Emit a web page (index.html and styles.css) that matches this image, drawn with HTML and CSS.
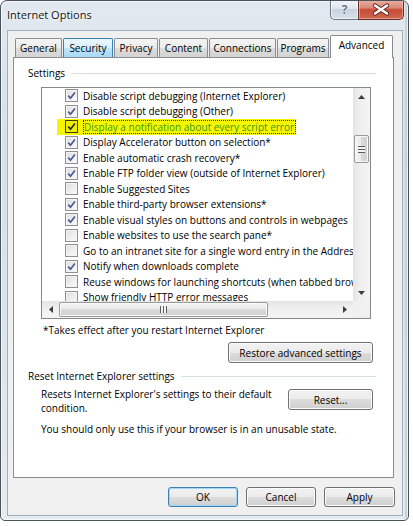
FILE: index.html
```html
<!DOCTYPE html>
<html>
<head>
<meta charset="utf-8">
<title>Internet Options</title>
<link rel="stylesheet" href="styles.css">
</head>
<body>
<div class="window">
  <div class="titlebar">
    <span class="title">Internet Options</span>
    <div class="caption">
      <div class="cbtn help">?</div>
      <div class="cbtn close">
        <svg width="44" height="19" viewBox="0 0 44 19">
          <path d="M16 5.5 L28 13.5 M28 5.5 L16 13.5" stroke="#5b2118" stroke-width="4.4" stroke-linecap="round"/>
          <path d="M16 5.5 L28 13.5 M28 5.5 L16 13.5" stroke="#ffffff" stroke-width="2.6" stroke-linecap="round"/>
        </svg>
      </div>
    </div>
  </div>
  <div class="client">
    <div class="tabs">
      <div class="tab t-general">General</div>
      <div class="tab t-security hover">Security</div>
      <div class="tab t-privacy">Privacy</div>
      <div class="tab t-content">Content</div>
      <div class="tab t-connections">Connections</div>
      <div class="tab t-programs">Programs</div>
      <div class="tab t-advanced active">Advanced</div>
    </div>
    <div class="panel">
      <div class="group-head"><span>Settings</span><i class="rule"></i></div>
      <div class="listbox">
        <div class="items">
          <div class="row"><span class="mark"><span class="cb on"><svg viewBox="0 0 11 11"><path d="M2.3 5.6 L4.5 8.2 L8.9 2.4"/></svg></span><span class="lbl">Disable script debugging (Internet Explorer)</span></span></div>
          <div class="row"><span class="mark"><span class="cb on"><svg viewBox="0 0 11 11"><path d="M2.3 5.6 L4.5 8.2 L8.9 2.4"/></svg></span><span class="lbl">Disable script debugging (Other)</span></span></div>
          <div class="row marked"><span class="mark"><span class="cb on"><svg viewBox="0 0 11 11"><path d="M2.3 5.6 L4.5 8.2 L8.9 2.4"/></svg></span><span class="lbl">Display a notification about every script error</span></span></div>
          <div class="row"><span class="mark"><span class="cb on"><svg viewBox="0 0 11 11"><path d="M2.3 5.6 L4.5 8.2 L8.9 2.4"/></svg></span><span class="lbl">Display Accelerator button on selection*</span></span></div>
          <div class="row"><span class="mark"><span class="cb on"><svg viewBox="0 0 11 11"><path d="M2.3 5.6 L4.5 8.2 L8.9 2.4"/></svg></span><span class="lbl">Enable automatic crash recovery*</span></span></div>
          <div class="row"><span class="mark"><span class="cb on"><svg viewBox="0 0 11 11"><path d="M2.3 5.6 L4.5 8.2 L8.9 2.4"/></svg></span><span class="lbl">Enable FTP folder view (outside of Internet Explorer)</span></span></div>
          <div class="row"><span class="mark"><span class="cb"></span><span class="lbl">Enable Suggested Sites</span></span></div>
          <div class="row"><span class="mark"><span class="cb on"><svg viewBox="0 0 11 11"><path d="M2.3 5.6 L4.5 8.2 L8.9 2.4"/></svg></span><span class="lbl">Enable third-party browser extensions*</span></span></div>
          <div class="row"><span class="mark"><span class="cb on"><svg viewBox="0 0 11 11"><path d="M2.3 5.6 L4.5 8.2 L8.9 2.4"/></svg></span><span class="lbl">Enable visual styles on buttons and controls in webpages</span></span></div>
          <div class="row"><span class="mark"><span class="cb"></span><span class="lbl">Enable websites to use the search pane*</span></span></div>
          <div class="row"><span class="mark"><span class="cb"></span><span class="lbl">Go to an intranet site for a single word entry in the Address bar</span></span></div>
          <div class="row"><span class="mark"><span class="cb on"><svg viewBox="0 0 11 11"><path d="M2.3 5.6 L4.5 8.2 L8.9 2.4"/></svg></span><span class="lbl">Notify when downloads complete</span></span></div>
          <div class="row"><span class="mark"><span class="cb"></span><span class="lbl">Reuse windows for launching shortcuts (when tabbed browsing is off)</span></span></div>
          <div class="row"><span class="mark"><span class="cb"></span><span class="lbl">Show friendly HTTP error messages</span></span></div>
        </div>
        <div class="vscroll">
          <div class="arrow"><svg width="7" height="4" viewBox="0 0 7 4"><polygon points="0,4 7,4 3.5,0" fill="#3c3c3c"/></svg></div>
          <div class="vtrack"><div class="vthumb"><span class="vgrip"></span></div></div>
          <div class="arrow"><svg width="7" height="4" viewBox="0 0 7 4"><polygon points="0,0 7,0 3.5,4" fill="#3c3c3c"/></svg></div>
        </div>
        <div class="hscroll">
          <div class="arrow"><svg width="4" height="7" viewBox="0 0 4 7"><polygon points="4,0 4,7 0,3.5" fill="#3c3c3c"/></svg></div>
          <div class="htrack"><div class="hthumb"><span class="hgrip"></span></div></div>
          <div class="arrow"><svg width="4" height="7" viewBox="0 0 4 7"><polygon points="0,0 0,7 4,3.5" fill="#3c3c3c"/></svg></div>
        </div>
        <div class="corner"></div>
      </div>
      <p class="note">*Takes effect after you restart Internet Explorer</p>
      <div class="restore-row"><button class="btn restore">Restore advanced settings</button></div>
      <div class="group-head reset-head"><span>Reset Internet Explorer settings</span><i class="rule"></i></div>
      <div class="reset-row">
        <p>Resets Internet Explorer's settings to their default<br>condition.</p>
        <button class="btn reset">Reset...</button>
      </div>
      <p class="warn">You should only use this if your browser is in an unusable state.</p>
    </div>
    <div class="actions">
      <button class="btn ok">OK</button>
      <button class="btn">Cancel</button>
      <button class="btn apply">Apply</button>
    </div>
  </div>
</div>
</body>
</html>
```

FILE: styles.css
```css
* { box-sizing: border-box; }
html, body { margin: 0; background: #ffffff; }
body {
  font-family: "Open Sans", "Noto Sans", sans-serif;
  font-size: 10px;
  color: #000;
}

.window {
  width: 409px;
  height: 521px;
  border: 1px solid #4b525a;
  border-radius: 7px 7px 5px 5px;
  background: linear-gradient(180deg, #e1e9f0 0%, #d5e0e9 30%, #dde6ed 70%, #e4ebf1 100%);
  box-shadow: inset 0 0 0 1px rgba(255,255,255,0.65), inset -3px 0 0 #c9d3d6;
  display: flex;
  flex-direction: column;
  overflow: hidden;
}

.titlebar {
  flex: none;
  height: 29px;
  display: flex;
  justify-content: space-between;
  align-items: flex-start;
  padding: 0 4px 0 6px;
}
.title {
  font-size: 11px;
  line-height: 14px;
  padding-top: 7px;
  color: #111;
  text-shadow: 0 0 5px #fff, 0 0 3px #fff;
}
.caption { display: flex; margin-top: -1px; }
.cbtn { height: 20px; display: flex; align-items: center; justify-content: center; }
.help {
  width: 28px;
  border: 1px solid #6f7985;
  border-top: none;
  border-right: none;
  border-radius: 0 0 0 5px;
  background: linear-gradient(180deg, #f3f6f9 0%, #dfe6ed 45%, #c9d3dd 50%, #d9e1e8 100%);
  box-shadow: inset 0 0 0 1px rgba(255,255,255,0.6);
  font-weight: bold;
  font-size: 12px;
  color: #69778a;
  text-shadow: 0 0 2px #fff, 0 0 1px #fff;
}
.close {
  width: 46px;
  border: 1px solid #6a2c24;
  border-top: none;
  border-radius: 0 0 5px 0;
  background: linear-gradient(180deg, #eab3a6 0%, #d98a78 40%, #c84a35 52%, #cf6a52 100%);
  box-shadow: inset 0 0 0 1px rgba(255,210,200,0.5);
}

.client {
  flex: none;
  height: 486px;
  margin: 0 5px 0 6px;
  border: 1px solid #a3aeb9;
  background: #f0f0f0;
  padding: 4px 0 0 5px;
  display: flex;
  flex-direction: column;
}

.tabs {
  display: flex;
  align-items: flex-end;
  height: 23px;
  margin: 0 0 -1px 2px;
  position: relative;
  z-index: 1;
}
.tab {
  height: 19px;
  margin-bottom: 1px;
  margin-right: 1px;
  border: 1px solid #898c95;
  border-bottom: none;
  border-radius: 2px 2px 0 0;
  background: linear-gradient(180deg, #f4f4f4 0%, #ececec 50%, #dedede 50%, #d3d3d3 100%);
  display: flex;
  align-items: center;
  justify-content: center;
  padding-bottom: 1px;
  white-space: nowrap;
}
.tab.hover {
  border-color: #3c7fb1;
  background: linear-gradient(180deg, #eaf6fd 0%, #d9f0fc 50%, #bee6fd 50%, #a7d9f5 100%);
}
.tab.active {
  height: 23px;
  margin-bottom: 0;
  background: #ffffff;
  padding-bottom: 4px;
}
.t-general { width: 47px; }
.t-security { width: 50px; }
.t-privacy { width: 44px; }
.t-content { width: 49px; }
.t-connections { width: 67px; }
.t-programs { width: 52px; }
.t-advanced { width: 63px; }

.panel {
  flex: none;
  height: 421px;
  margin-right: 8px;
  background: #ffffff;
  border: 1px solid #898c95;
  padding-top: 8px;
}

.group-head {
  display: flex;
  align-items: center;
  gap: 6px;
  height: 14px;
  margin: 0 17px 0 14px;
  white-space: nowrap;
}
.rule {
  flex: 1;
  height: 1px;
  background: #d5dfe5;
  box-shadow: 0 1px 0 #fff;
}

.listbox {
  margin: 7px 0 0 27px;
  width: 330px;
  height: 232px;
  border: 1px solid #828790;
  display: grid;
  grid-template-columns: 1fr 17px;
  grid-template-rows: 1fr 17px;
}
.items {
  overflow: hidden;
  white-space: nowrap;
}
.row {
  height: 15.5px;
  display: flex;
  align-items: center;
  padding-left: 15px;
}
.mark {
  display: inline-flex;
  align-items: center;
  height: 15.5px;
  padding-left: 8px;
}
.cb {
  width: 13px;
  height: 13px;
  flex: none;
  border: 1px solid #8f8f8f;
  background: linear-gradient(135deg, #dcdcdc 0%, #f0f0f0 60%, #fbfbfb 100%);
  box-shadow: inset 0 0 0 1px #f4f4f4;
  margin-right: 5px;
  display: flex;
}
.cb svg { width: 11px; height: 11px; }
.cb svg path { fill: none; stroke: #4a5a8e; stroke-width: 1.7; }
.lbl { line-height: 14px; padding-right: 2px; }

.row.marked .mark { background: #f6f500; }
.row.marked .cb { background: #eeee00; border-color: #3d3d00; box-shadow: none; }
.row.marked .cb svg path { stroke: #2b2b00; }
.row.marked .lbl {
  color: #3d9a1a;
  outline: 1px dotted #3a3a00;
  outline-offset: -1px;
  padding-left: 1px;
}

.vscroll {
  display: flex;
  flex-direction: column;
  background: linear-gradient(90deg, #e4e4e4 0%, #efefef 40%, #f4f4f4 100%);
}
.hscroll {
  display: flex;
  background: linear-gradient(180deg, #e4e4e4 0%, #efefef 40%, #f4f4f4 100%);
}
.arrow {
  width: 17px;
  height: 17px;
  flex: none;
  display: flex;
  align-items: center;
  justify-content: center;
}
.vtrack { flex: 1; padding: 30px 1px 0 1px; }
.vthumb {
  height: 28px;
  border: 1px solid #9a9a9a;
  border-radius: 2px;
  background: linear-gradient(90deg, #f4f4f4 0%, #eaeaea 50%, #dadada 50%, #d0d0d0 100%);
  box-shadow: inset 0 0 0 1px #fafafa;
  display: flex;
  align-items: center;
  justify-content: center;
}
.vgrip {
  width: 7px;
  height: 7px;
  background: repeating-linear-gradient(180deg, #5a5a5a 0px, #5a5a5a 1px, #f4f4f4 1px, #f4f4f4 3px);
}
.htrack { flex: 1; padding: 1px 0 1px 0; }
.hthumb {
  width: 209px;
  height: 15px;
  border: 1px solid #9a9a9a;
  border-radius: 2px;
  background: linear-gradient(180deg, #f4f4f4 0%, #eaeaea 50%, #dadada 50%, #d0d0d0 100%);
  box-shadow: inset 0 0 0 1px #fafafa;
  display: flex;
  align-items: center;
  justify-content: center;
}
.hgrip {
  width: 7px;
  height: 7px;
  background: repeating-linear-gradient(90deg, #5a5a5a 0px, #5a5a5a 1px, #f4f4f4 1px, #f4f4f4 3px);
}
.corner { background: #f0f0f0; }

.note {
  margin: 4px 0 0 29px;
  line-height: 14px;
}
.restore-row {
  display: flex;
  justify-content: flex-end;
  margin-top: 5px;
  padding-right: 20px;
}
.btn {
  font: inherit;
  color: #000;
  height: 21px;
  padding: 0;
  border: 1px solid #707070;
  border-radius: 3px;
  background: linear-gradient(180deg, #f2f2f2 0%, #ebebeb 50%, #dddddd 50%, #cfcfcf 100%);
  box-shadow: inset 0 0 0 1px #fcfcfc;
}
.restore { width: 145px; }
.reset-head { margin-top: 6px; }
.reset-row {
  display: flex;
  justify-content: space-between;
  align-items: flex-start;
  margin: 4px 20px 0 27px;
}
.reset-row p { margin: 0; line-height: 14px; }
.reset { width: 85px; margin-top: 2px; }
.warn {
  margin: 7px 0 0 27px;
  line-height: 14px;
}

.actions {
  display: flex;
  justify-content: flex-end;
  gap: 8px;
  margin: 9px 7px 0 0;
}
.actions .btn { width: 70px; height: 20px; }
.actions .apply { width: 71px; }
.btn.ok {
  border-color: #3c7fb1;
  box-shadow: inset 0 0 0 1px #9fd8f6;
}
```
